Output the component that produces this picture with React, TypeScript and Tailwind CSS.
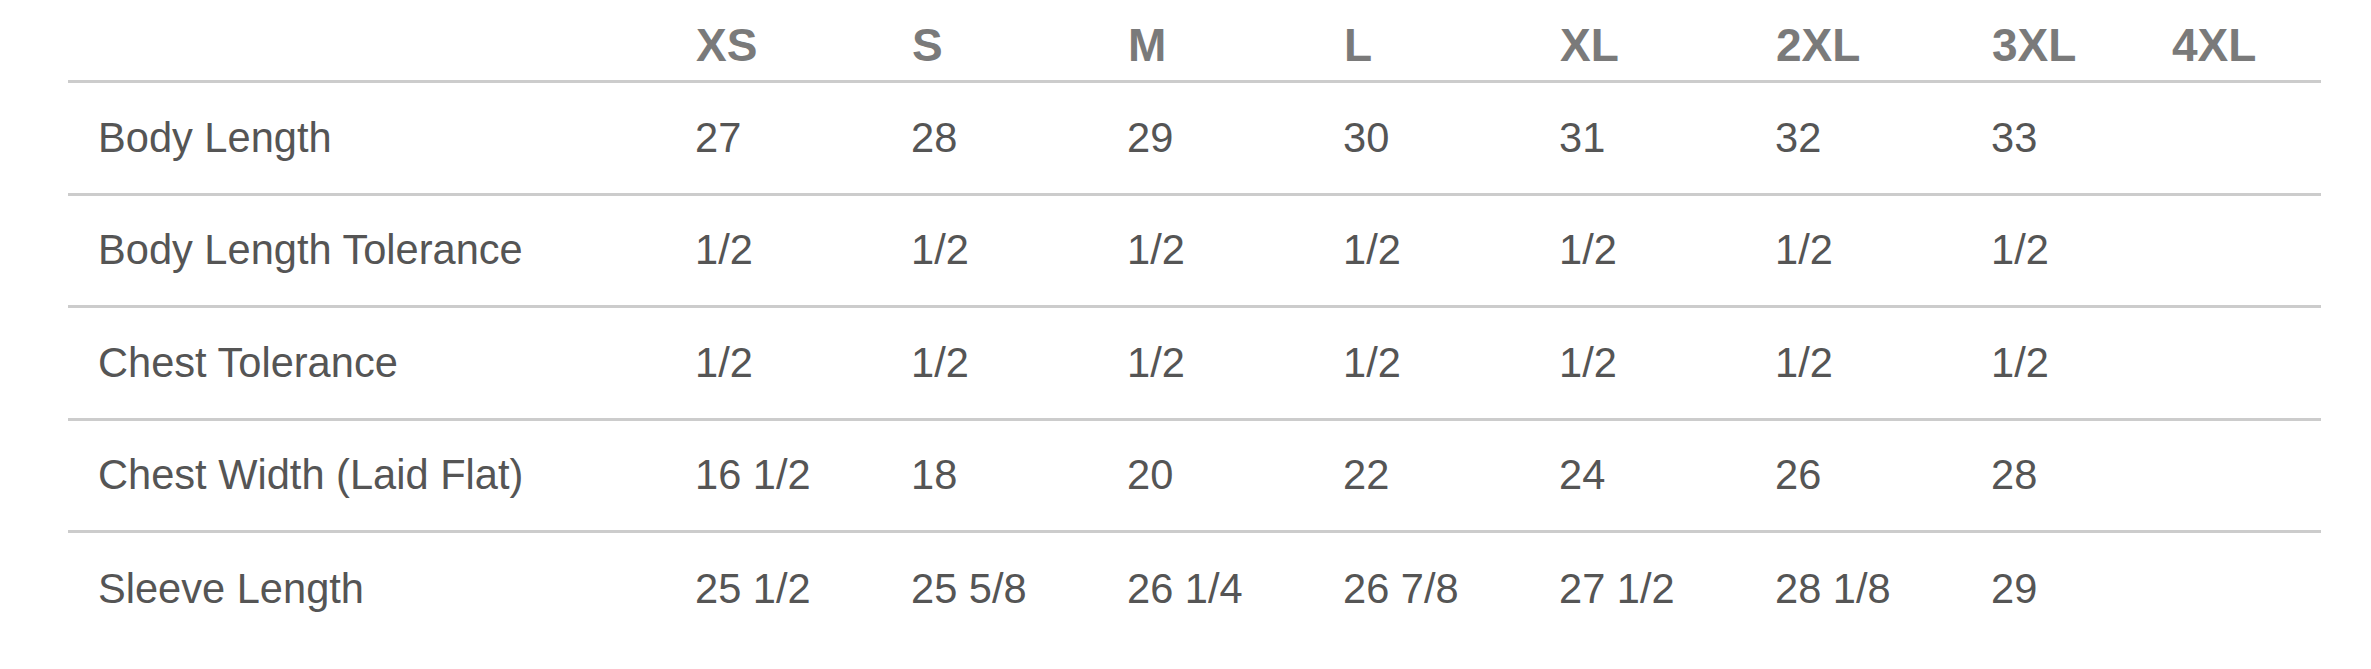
import React from "react";

const sizes = ["XS", "S", "M", "L", "XL", "2XL", "3XL", "4XL"];

const rows: { label: string; values: string[] }[] = [
  { label: "Body Length", values: ["27", "28", "29", "30", "31", "32", "33", ""] },
  { label: "Body Length Tolerance", values: ["1/2", "1/2", "1/2", "1/2", "1/2", "1/2", "1/2", ""] },
  { label: "Chest Tolerance", values: ["1/2", "1/2", "1/2", "1/2", "1/2", "1/2", "1/2", ""] },
  { label: "Chest Width (Laid Flat)", values: ["16 1/2", "18", "20", "22", "24", "26", "28", ""] },
  { label: "Sleeve Length", values: ["25 1/2", "25 5/8", "26 1/4", "26 7/8", "27 1/2", "28 1/8", "29", ""] },
];

const cols = "grid grid-cols-[597px_216px_216px_216px_216px_216px_216px_180px_180px]";

const App = () => {
  return (
    <div className="w-[2371px] h-[669px] bg-white overflow-hidden" style={{ fontFamily: '"Liberation Sans", Arial, sans-serif' }}>
      <div className="ml-[68px] w-[2253px]">
        {/* header */}
        <div className={`${cols} h-[83px] border-b-[3px] border-[#cccccc] items-center pt-[9px]`}>
          <div></div>
          {sizes.map((s) => (
            <div key={s} className="pl-[31px] text-[46px] font-bold text-[#7a7a7a] leading-none">
              {s}
            </div>
          ))}
        </div>
        {rows.map((r, i) => (
          <div
            key={r.label}
            className={`${cols} h-[112.5px] items-center ${i < rows.length - 1 ? "border-b-[3px] border-[#cccccc]" : ""}`}
          >
            <div className="pl-[30px] text-[41.6px] text-[#555555] whitespace-nowrap">{r.label}</div>
            {r.values.map((v, j) => (
              <div key={j} className="pl-[30px] text-[41.6px] text-[#555555] whitespace-nowrap">
                {v}
              </div>
            ))}
          </div>
        ))}
      </div>
    </div>
  );
};

export default App;
